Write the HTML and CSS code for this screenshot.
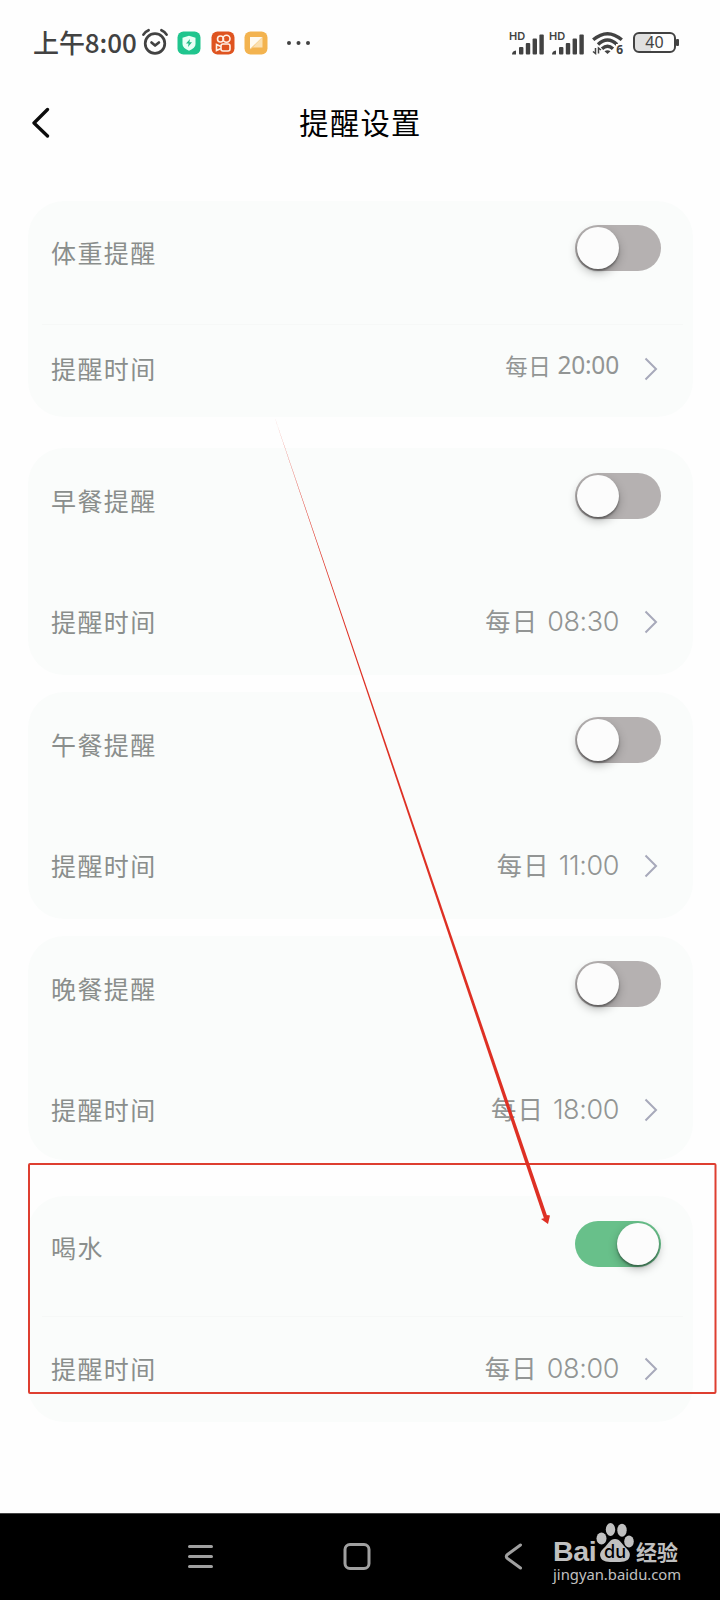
FILE: index.html
```html
<!DOCTYPE html>
<html lang="zh-CN">
<head>
<meta charset="utf-8">
<title>提醒设置</title>
<link rel="stylesheet" href="styles.css">
</head>
<body>
<div class="screen">
  <div class="status">
    <span class="clock">上午8:00</span>
    <svg class="alarm" width="28" height="28" viewBox="0 0 28 28" fill="none" stroke="#424242" stroke-width="2.7" stroke-linecap="round" stroke-linejoin="round"><circle cx="14" cy="15.5" r="9.8"/><path d="M10.5 14.5l3.6 3 3.8-3M2.4 6.6Q4.300 3.600 7.600 2.200M25.600 6.600Q23.700 3.600 20.400 2.200"/></svg>
    <svg class="app" width="24" height="24" viewBox="0 0 24 24"><rect x=".5" y=".5" width="23" height="23" rx="6" fill="#20c58e"/><path d="M12 4.800l6.500 2v6.200q0 4-6.500 6.700Q5.500 17 5.500 13V6.800z" fill="#e9fff6"/><path d="M13 8l-4 4.600h2.600L11 16l4-4.700h-2.600z" fill="#20b985"/></svg>
    <svg class="app" width="24" height="24" viewBox="0 0 24 24"><rect x=".5" y=".5" width="23" height="23" rx="6" fill="#df5420"/><g fill="none" stroke="#fff0e5" stroke-width="1.600"><circle cx="9.500" cy="8" r="3"/><circle cx="15.500" cy="7.700" r="3.500"/><rect x="10" y="13" width="9" height="7" rx="2"/><path d="M10 15.500l-4.500-2v6l4.500-2"/></g></svg>
    <svg class="app" width="24" height="24" viewBox="0 0 24 24"><rect x=".5" y=".5" width="23" height="23" rx="6" fill="#f3b34f"/><path d="M6 6h12.500L6 18z" fill="#fffaf0"/><path d="M18.500 6v10.500H9L6 19z" fill="#fbe0b0"/></svg>
    <svg class="more" width="26" height="6" viewBox="0 0 26 6" fill="#424242"><circle cx="3" cy="3" r="2"/><circle cx="12.500" cy="3" r="2"/><circle cx="22" cy="3" r="2"/></svg>
    <div class="status-right">
      <div class="signal"><span class="hd">HD</span><svg width="34" height="22" viewBox="0 0 34 22" fill="#424242"><path d="M1 21.500q0-3.500 4-4v4z"/><rect x="8" y="14" width="4.400" height="7.500" rx="1"/><rect x="14.800" y="10" width="4.400" height="11.500" rx="1"/><rect x="21.600" y="5.500" width="4.400" height="16" rx="1"/><rect x="28.400" y="1.500" width="4.400" height="20" rx="1"/></svg></div>
      <div class="signal"><span class="hd">HD</span><svg width="34" height="22" viewBox="0 0 34 22" fill="#424242"><path d="M1 21.500q0-3.500 4-4v4z"/><rect x="8" y="14" width="4.400" height="7.500" rx="1"/><rect x="14.800" y="10" width="4.400" height="11.500" rx="1"/><rect x="21.600" y="5.500" width="4.400" height="16" rx="1"/><rect x="28.400" y="1.500" width="4.400" height="20" rx="1"/></svg></div>
      <div class="wifi"><svg width="32" height="24" viewBox="0 0 32 24" fill="none" stroke="#424242" stroke-width="3.400"><path d="M1.200 8.800Q15.500-3.500 29.800 8.800M6 13.500Q15.500 4.500 25 13.500M10 17.800Q15.500 12.800 21 17.800"/><path d="M15.500 23l-3-2.800q3-2 6 0z" fill="#424242" stroke="none"/><path d="M3.500 17v5.500l-2.500-2M6.500 22.500V17l2.500 2" stroke-width="1.500"/></svg><span class="gen">6</span></div>
      <div class="battery"><span class="charge">40</span></div>
    </div>
  </div>

  <div class="header">
    <svg class="back" width="20" height="32" viewBox="0 0 20 32" fill="none" stroke="#0c0c0c" stroke-width="3.300" stroke-linecap="round" stroke-linejoin="round"><path d="M15.500 3.500L2 17l13.500 13"/></svg>
    <h1 class="title">提醒设置</h1>
  </div>

  <div class="cards">
    <section class="card card-weight">
      <div class="row row-top"><span class="label">体重提醒</span><span class="toggle"><i class="knob"></i></span></div>
      <div class="divider divider-visible"></div>
      <div class="row"><span class="label">提醒时间</span><span class="value"><b class="day">每日</b><b class="time">20:00</b></span><svg class="chevron" width="14" height="24" viewBox="0 0 14 24"><path d="M1.500 1.500L12 12 1.500 22.500"/></svg></div>
    </section>
    <section class="card card-breakfast">
      <div class="row row-top"><span class="label">早餐提醒</span><span class="toggle"><i class="knob"></i></span></div>
      <div class="divider"></div>
      <div class="row"><span class="label">提醒时间</span><span class="value"><b class="day">每日</b><b class="time">08:30</b></span><svg class="chevron" width="14" height="24" viewBox="0 0 14 24"><path d="M1.500 1.500L12 12 1.500 22.500"/></svg></div>
    </section>
    <section class="card card-lunch">
      <div class="row row-top"><span class="label">午餐提醒</span><span class="toggle"><i class="knob"></i></span></div>
      <div class="divider"></div>
      <div class="row"><span class="label">提醒时间</span><span class="value"><b class="day">每日</b><b class="time">11:00</b></span><svg class="chevron" width="14" height="24" viewBox="0 0 14 24"><path d="M1.500 1.500L12 12 1.500 22.500"/></svg></div>
    </section>
    <section class="card card-dinner">
      <div class="row row-top"><span class="label">晚餐提醒</span><span class="toggle"><i class="knob"></i></span></div>
      <div class="divider"></div>
      <div class="row"><span class="label">提醒时间</span><span class="value"><b class="day">每日</b><b class="time">18:00</b></span><svg class="chevron" width="14" height="24" viewBox="0 0 14 24"><path d="M1.500 1.500L12 12 1.500 22.500"/></svg></div>
    </section>
    <section class="card card-water">
      <div class="row row-top"><span class="label">喝水</span><span class="toggle toggle-on"><i class="knob"></i></span></div>
      <div class="divider divider-visible"></div>
      <div class="row"><span class="label">提醒时间</span><span class="value"><b class="day">每日</b><b class="time">08:00</b></span><svg class="chevron" width="14" height="24" viewBox="0 0 14 24"><path d="M1.500 1.500L12 12 1.500 22.500"/></svg></div>
    </section>
  </div>

  <div class="navbar">
    <svg class="nav-menu" width="28" height="28" viewBox="0 0 28 28" stroke="#a0a0a0" stroke-width="3" stroke-linecap="round"><path d="M2.500 3.500h22M2.500 13.500h22M2.500 23.500h22"/></svg>
    <svg class="nav-home" width="28" height="28" viewBox="0 0 28 28" fill="none" stroke="#a0a0a0" stroke-width="3"><rect x="2" y="1.500" width="24" height="24" rx="5"/></svg>
    <svg class="nav-back" width="20" height="28" viewBox="0 0 20 28" fill="none" stroke="#a0a0a0" stroke-width="3" stroke-linecap="round" stroke-linejoin="round"><path d="M16.500 2L3.500 11.500q-2.500 2 0 4l13 9.500"/></svg>
    <div class="brand">
      <div class="brand-name">
        <span class="bai">Bai</span>
        <span class="paw"><svg width="40" height="42" viewBox="0 0 40 42" fill="#c0c0c0"><ellipse cx="5.500" cy="16.500" rx="5" ry="6"/><ellipse cx="14.500" cy="7.500" rx="4.700" ry="6.500"/><ellipse cx="26" cy="8.200" rx="4.700" ry="6.500"/><ellipse cx="33" cy="19.500" rx="4.800" ry="6"/><path d="M19 17c5 0 7 5 10 8s6 5.500 4.500 10c-1.500 5-8 5-14.500 5s-13 0-14.500-5C3 30.500 6 28 9 25s5-8 10-8z"/></svg><span class="du">du</span></span>
        <span class="jingyan">经验</span>
      </div>
      <div class="brand-url">jingyan.baidu.com</div>
    </div>
  </div>

  <svg class="annotation" width="720" height="1600" viewBox="0 0 720 1600">
    <rect x="29" y="1164" width="686.500" height="229" rx="1" fill="none" stroke="#de3e30" stroke-width="2"/>
    <path d="M273.500 414L547.500 1217 544 1218.500z" fill="#de3024"/>
    <path d="M541 1219L544.500 1218 547.500 1215 550 1215.500 548 1224z" fill="#de3024"/>
  </svg>
</div>
</body>
</html>
```
FILE: styles.css
```css
* { box-sizing: border-box; }
body { margin: 0; font-family: "Noto Sans CJK SC", sans-serif; background: #fefefe; }
.screen { position: relative; width: 720px; height: 1600px; display: flex; flex-direction: column; overflow: hidden; }

.status { height: 86px; display: flex; align-items: center; padding: 0 44px 0 33px; color: #424242; }
.clock { width: 105px; margin-top: -3px; font-size: 26px; line-height: 40px; letter-spacing: -.1px; white-space: nowrap; font-weight: 500; }
.alarm { margin-left: 3px; margin-top: -3px; }
.app { margin-left: 9.500px; margin-top: -1px; }
.alarm + .app { margin-left: 8px; }
.more { margin-left: 18px; }
.status-right { margin-left: auto; display: flex; align-items: center; }
.signal { position: relative; width: 40px; height: 24px; display: flex; align-items: flex-end; }
.hd { position: absolute; left: -2px; top: 0; font: 600 11px/11px Inter, sans-serif; letter-spacing: 0; }
.wifi { position: relative; width: 32px; height: 24px; margin-left: 1px; margin-right: 1px; }
.gen { position: absolute; right: 1px; bottom: -1px; font: 700 12px/12px "Noto Sans", sans-serif; background: #fefefe; }
.battery { position: relative; width: 43px; height: 21px; margin-left: 8px; margin-top: -1px; border: 2px solid #424242; border-radius: 6px; background: linear-gradient(90deg, #e0e0e0 0 40%, #fefefe 40%); display: flex; align-items: center; justify-content: center; }
.battery::after { content: ""; position: absolute; right: -5px; top: 5px; width: 3px; height: 7px; border-radius: 1px; background: #424242; }
.charge { font: 400 16px/17px "Noto Sans", sans-serif; }

.header { height: 115px; display: grid; grid-template-columns: 60px 1fr 60px; align-items: start; }
.back { margin: 20px 0 0 32px; }
.title { margin: 14px 0 0 1px; text-align: center; font-weight: 400; font-size: 29.300px; line-height: 42px; letter-spacing: 1.3px; color: #000; }

.cards { flex: 1; display: flex; flex-direction: column; padding: 0 27px 0 28px; }
.card { flex: none; display: flex; flex-direction: column; border-radius: 36px; background: #fafcfb; }
.card-weight { height: 216px; margin-bottom: 31px; }
.card-breakfast, .card-lunch { height: 227px; margin-bottom: 17px; }
.card-dinner { height: 224px; margin-bottom: 36px; }
.card-water { height: 226px; }
.row { height: 48px; display: flex; align-items: center; padding: 0 35px 0 23px; }
.row-top { height: 96px; padding-right: 32px; }
.card-weight .row-top { height: 94px; }
.card-water .row-top { height: 95px; }
.label { flex: 1; margin-top: -2px; font-size: 25px; line-height: 36px; letter-spacing: 1.4px; font-weight: 400; color: #8a8e8c; white-space: nowrap; }
.row-top .label { margin-top: 7px; }
.divider { height: 54px; margin: 0 10px 0 14px; }
.card-weight .divider { height: 50px; }
.divider-visible { background: linear-gradient(#f6f8f7, #f6f8f7) 0 25px / 100% 1px no-repeat; }
.card-weight .divider-visible { background-position: 0 29px; }
.toggle { width: 86px; height: 46px; padding: 2px; border-radius: 23px; background: #b5b1b1; display: flex; }
.toggle-on { background: #68c08a; justify-content: flex-end; }
.knob { width: 42px; height: 42px; border-radius: 50%; background: #fcfcfc; box-shadow: 0 2px 2px rgba(0, 0, 0, .34), 0 4px 10px rgba(0, 0, 0, .26); }
.value { display: flex; align-items: center; color: #929594; white-space: nowrap; }
.value b { font-weight: 400; }
.day { margin-top: -4px; font-size: 25.300px; line-height: 36px; letter-spacing: 1.2px; margin-right: 9px; }
.value .time { font-family: Inter, sans-serif; font-size: 27px; font-weight: 350; line-height: 36px; letter-spacing: -.4px; }
.card-weight .value { margin-top: -8px; }
.card-weight .day { margin-top: 0; font-size: 22.500px; letter-spacing: .5px; margin-right: 6px; }
.card-weight .value .time { font-family: "Noto Sans", sans-serif; font-size: 24.500px; font-weight: 400; letter-spacing: -.2px; }
.chevron { margin-left: 25px; fill: none; stroke: #a7a9ba; stroke-width: 2; }

.navbar { height: 87px; background: #000; border-top: 1px solid #444; display: flex; align-items: flex-start; padding-left: 187px; }
.nav-menu, .nav-home, .nav-back { flex: none; margin-top: 29px; }
.nav-home { margin-left: 128px; }
.nav-back { margin-left: 133px; }
.brand { margin: 8px 0 0 29px; color: #c0c0c0; white-space: nowrap; }
.brand-name { display: flex; align-items: flex-end; height: 42px; }
.bai { width: 43px; margin-bottom: 2px; font: 700 28.500px/21px "Liberation Sans", sans-serif; letter-spacing: -.4px; }
.paw { position: relative; width: 40px; height: 42px; }
.du { position: absolute; left: 8px; bottom: 2px; color: #000; font: 500 18px/20px Inter, sans-serif; }
.jingyan { margin-bottom: 1px; font-weight: 700; font-size: 21px; line-height: 24px; }
.brand-url { font: 400 14.800px/20px "Noto Sans", sans-serif; }

.annotation { position: absolute; left: 0; top: 0; pointer-events: none; }
```
